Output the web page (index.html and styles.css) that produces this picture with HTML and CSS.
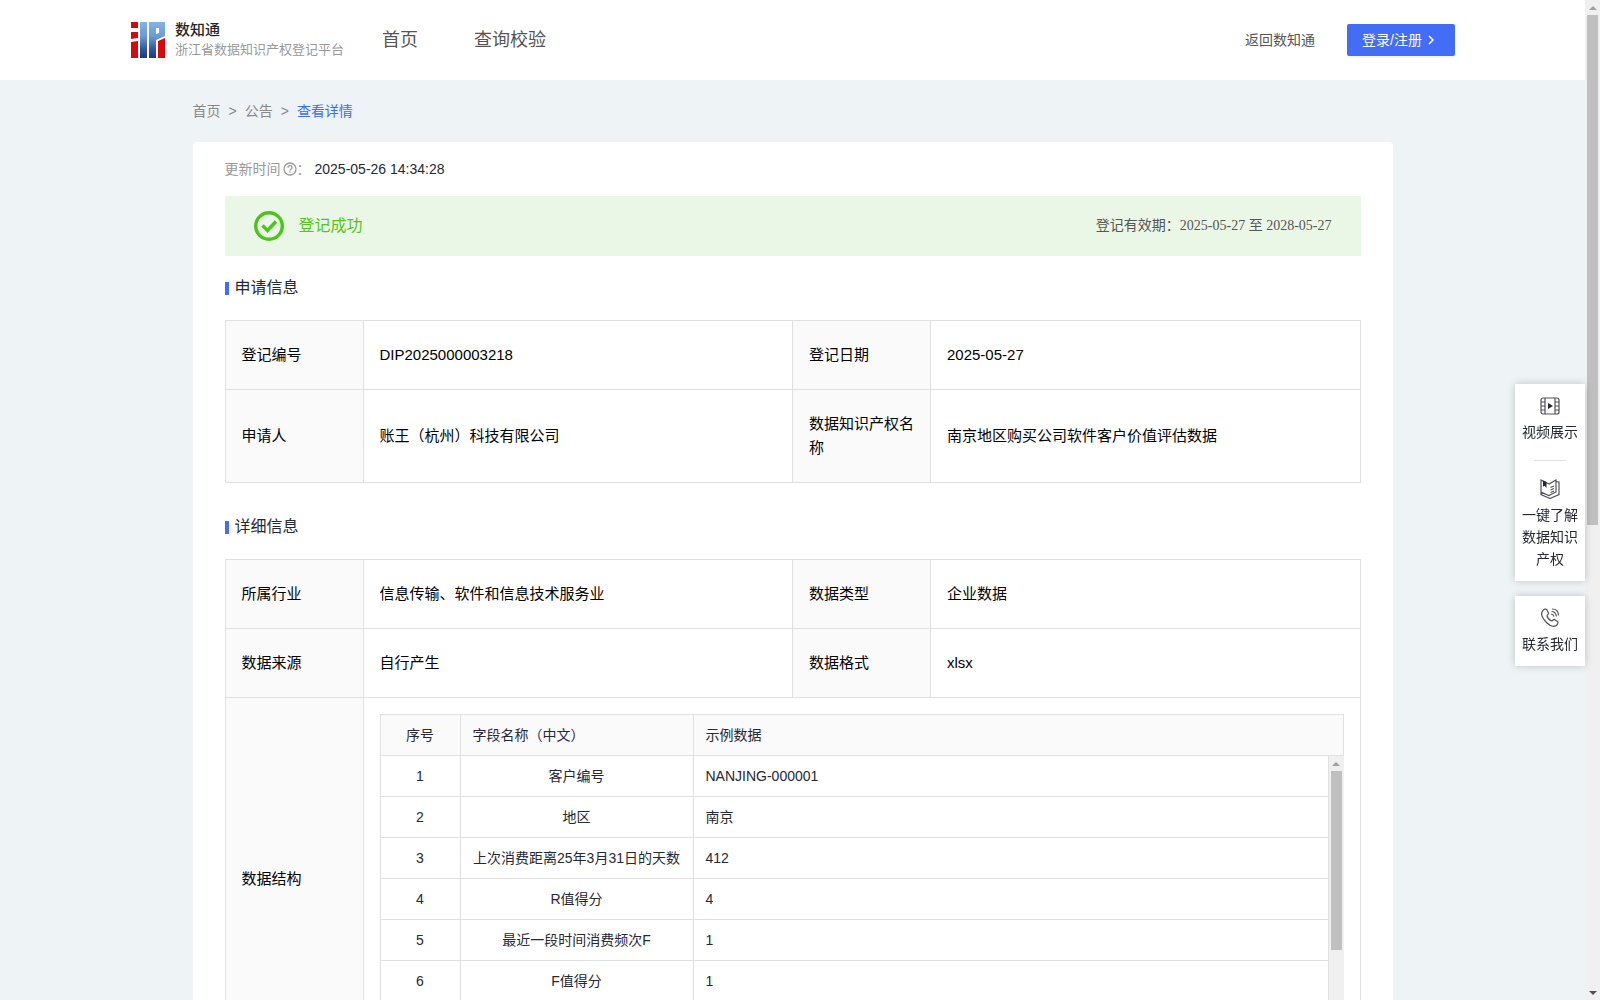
FILE: index.html
```html
<!DOCTYPE html>
<html lang="zh-CN">
<head>
<meta charset="utf-8">
<title>数知通 - 查看详情</title>
<link rel="stylesheet" href="styles.css">
</head>
<body>
<div class="app">
  <div class="page">
    <header class="header">
      <a class="brand" href="#">
        <svg class="brand-logo" viewBox="0 0 34 36" aria-hidden="true">
          <defs>
            <linearGradient id="blue" gradientUnits="userSpaceOnUse" x1="0" y1="0" x2="0" y2="36">
              <stop offset="0" stop-color="#82b4e8"/>
              <stop offset="0.4" stop-color="#6a9bd6"/>
              <stop offset="0.75" stop-color="#3457a0"/>
              <stop offset="1" stop-color="#22377f"/>
            </linearGradient>
          </defs>
          <path fill="#d40a0d" d="M0 0h7v6H0zM0 10h7v6l-7 1zM0 20l7-1v17H0zM27 19l7-3v20h-7z"/>
          <path fill="url(#blue)" d="M9 0h7v36H9z"/>
          <path fill="url(#blue)" fill-rule="evenodd" d="M18 0h16v14l-9 4v18h-7zM25 6v6l3-1V6z"/>
        </svg>
        <span class="brand-text">
          <strong class="brand-name">数知通</strong>
          <span class="brand-sub">浙江省数据知识产权登记平台</span>
        </span>
      </a>
      <nav class="nav">
        <a href="#">首页</a>
        <a href="#">查询校验</a>
      </nav>
      <a class="back-link" href="#">返回数知通</a>
      <button class="login" type="button">登录/注册
        <svg class="chevron" viewBox="0 0 10 10" aria-hidden="true"><path d="M3 1l4 4-4 4"/></svg>
      </button>
    </header>

    <main class="container">
      <nav class="breadcrumb" aria-label="面包屑">
        <a href="#">首页</a><span>&gt;</span><a href="#">公告</a><span>&gt;</span><a class="current" href="#">查看详情</a>
      </nav>

      <section class="card">
        <div class="updated">
          <span>更新时间</span>
          <svg class="help" viewBox="0 0 14 14" aria-hidden="true"><circle cx="7" cy="7" r="6"/><path d="M5 5.7a2 2 0 1 1 3 1.5c-.7.4-1 .7-1 1.4M7 9.6v1.1"/></svg>
          <span>：</span>
          <time class="updated-time">2025-05-26 14:34:28</time>
        </div>

        <div class="banner">
          <svg class="check" viewBox="0 0 30 30" aria-hidden="true"><circle cx="15" cy="15" r="13.3"/><path d="M8.500 14.500l5 5 8.500-9"/></svg>
          <span class="banner-title">登记成功</span>
          <span class="validity">登记有效期：2025-05-27 至 2028-05-27</span>
        </div>

        <h2 class="section-title">申请信息</h2>
        <table class="info">
          <colgroup><col class="label-col"><col><col class="label-col"><col></colgroup>
          <tbody>
            <tr><th scope="row">登记编号</th><td>DIP2025000003218</td><th scope="row">登记日期</th><td>2025-05-27</td></tr>
            <tr><th scope="row">申请人</th><td>账王（杭州）科技有限公司</td><th scope="row">数据知识产权名称</th><td>南京地区购买公司软件客户价值评估数据</td></tr>
          </tbody>
        </table>

        <h2 class="section-title">详细信息</h2>
        <table class="info">
          <colgroup><col class="label-col"><col><col class="label-col"><col></colgroup>
          <tbody>
            <tr><th scope="row">所属行业</th><td>信息传输、软件和信息技术服务业</td><th scope="row">数据类型</th><td>企业数据</td></tr>
            <tr><th scope="row">数据来源</th><td>自行产生</td><th scope="row">数据格式</th><td>xlsx</td></tr>
            <tr>
              <th scope="row">数据结构</th>
              <td class="nested" colspan="3">
                <table class="fields fields-head">
                  <colgroup><col class="no-col"><col class="name-col"><col></colgroup>
                  <thead><tr><th class="center" scope="col">序号</th><th scope="col">字段名称（中文）</th><th scope="col">示例数据</th></tr></thead>
                </table>
                <div class="fields-body">
                  <div class="fields-scroll">
                    <table class="fields">
                      <colgroup><col class="no-col"><col class="name-col"><col></colgroup>
                      <tbody>
                        <tr><td class="center">1</td><td class="center">客户编号</td><td>NANJING-000001</td></tr>
                        <tr><td class="center">2</td><td class="center">地区</td><td>南京</td></tr>
                        <tr><td class="center">3</td><td class="center">上次消费距离25年3月31日的天数</td><td>412</td></tr>
                        <tr><td class="center">4</td><td class="center">R值得分</td><td>4</td></tr>
                        <tr><td class="center">5</td><td class="center">最近一段时间消费频次F</td><td>1</td></tr>
                        <tr><td class="center">6</td><td class="center">F值得分</td><td>1</td></tr>
                        <tr><td class="center"></td><td class="center"></td><td></td></tr>
                      </tbody>
                    </table>
                  </div>
                  <div class="scrollbar" aria-hidden="true"><i class="arrow up"></i><i class="thumb thumb-fields"></i><i class="arrow down"></i></div>
                </div>
              </td>
            </tr>
          </tbody>
        </table>
      </section>
    </main>
  </div>

  <div class="scrollbar" aria-hidden="true"><i class="arrow up"></i><i class="thumb thumb-page"></i><i class="arrow down"></i></div>
</div>

<aside class="tools">
  <div class="tool-group">
    <a class="tool" href="#">
      <svg viewBox="0 0 20 20" aria-hidden="true"><rect x="1" y="2" width="18" height="16" rx="2"/><path d="M5 2v16M15 2v16M1 6h4M1 10h4M1 14h4M15 6h4M15 10h4M15 14h4"/><path class="solid" d="M8 7l5 3-5 3z"/></svg>
      <span>视频展示</span>
    </a>
    <a class="tool" href="#">
      <svg viewBox="0 0 20 20" aria-hidden="true"><path d="M1 1l8 4 7-4v12l-7 3.500-8-3.500zM1 13v2.500l9 4 9-4V3l-3-.5M10.500 8.500l3.500-1.500M10.500 11l3.500-1.500M10.500 13.500L14 12"/><path class="solid" d="M3 1.500l3.500 1.500v6L4.800 7 3 7.500z"/></svg>
      <span>一键了解数据知识产权</span>
    </a>
  </div>
  <div class="tool-group">
    <a class="tool" href="#">
      <svg viewBox="0 0 20 20" aria-hidden="true"><path d="M3 2.500C4 1 6 .5 7 2l1.500 3c.5 1-1.500 2-1.500 3 .5 2 2.500 4 4.500 5 1 0 2-2 3-1.500l3 2c1 1 .5 2-.5 3.500-2 2-6 2-10-2S-.5 6 3 2.500zM11 6c1.500 0 2.500 1 3 2.500M11.500 3.500c3 0 4.500 2 5 5M12 1c4 0 6.500 2.500 6.500 6.500"/></svg>
      <span>联系我们</span>
    </a>
  </div>
</aside>
</body>
</html>
```
FILE: styles.css
```css
* { box-sizing: border-box; }

body {
  margin: 0;
  background: #eef3f6;
  color: #262833;
  font: 14px/22px "Liberation Sans", "Noto Sans CJK SC", sans-serif;
}

a { color: inherit; text-decoration: none; }

.app {
  display: grid;
  grid-template-columns: minmax(0, 1fr) 15px;
  height: 100vh;
}

.page { overflow-y: auto; scrollbar-width: none; }

/* Header */
.header {
  display: flex;
  align-items: center;
  height: 80px;
  padding: 0 130px;
  background: #fff;
  color: #555;
}

.brand { display: flex; align-items: center; gap: 10px; margin-right: 38px; padding-left: 1px; }
.brand-logo { width: 34px; height: 36px; }
.brand-text { display: grid; }
.brand-name { color: #262626; font-size: 15px; line-height: 20px; font-weight: 500; }
.brand-sub { color: #999; font-size: 13px; line-height: 20px; }

.nav { display: flex; gap: 56px; margin-right: auto; font-size: 18px; }

.back-link { margin-right: 32px; }

.login {
  display: flex;
  align-items: center;
  gap: 4px;
  height: 32px;
  padding: 0 19px 0 15px;
  border: 0;
  border-radius: 2px;
  background: #446df6;
  box-shadow: 0 2px 0 rgba(0, 0, 0, 0.04);
  color: #fff;
  font: inherit;
}

.chevron { width: 10px; height: 10px; fill: none; stroke: currentColor; stroke-width: 1.500; }

/* Body */
.container { max-width: 1200px; margin: 0 auto; padding-bottom: 40px; }

.breadcrumb {
  display: flex;
  gap: 8px;
  padding: 20px 0;
  color: #888;
}

.breadcrumb .current { color: #3f6bf5; }

.card { padding: 16px 32px 32px; border-radius: 4px; background: #fff; }

.updated { display: flex; align-items: center; color: #999; }
.updated-time { margin-left: 4px; color: #262833; }
.help { width: 14px; height: 14px; margin-left: 2px; fill: none; stroke: currentColor; stroke-width: 1.300; }

.banner {
  display: flex;
  align-items: center;
  height: 60px;
  margin: 16px 0 21px;
  padding: 0 29px;
  background: #ebf7e6;
}

.check { width: 30px; height: 30px; margin-right: 15px; fill: none; stroke: #4bc41c; stroke-width: 3.400; }
.banner-title { color: #52c41a; font-size: 16px; }
.validity { margin-left: auto; color: #555; font-family: "Liberation Serif", "Noto Sans CJK SC", serif; }

.section-title {
  display: flex;
  align-items: center;
  gap: 6px;
  margin: 0 0 21px;
  font-size: 16px;
  line-height: 22px;
  font-weight: 400;
}

.section-title::before { content: ""; width: 4px; height: 13px; background: #446df6; }

/* Tables */
table { width: 100%; border-collapse: separate; border-spacing: 0; table-layout: fixed; }
th, td { text-align: left; font-weight: 400; border: 0 solid #e0e0e0; }
th { background: #fafafa; }

.info { margin-bottom: 33px; border: 0 solid #e0e0e0; border-width: 1px 0 0 1px; color: #000; font-size: 15px; line-height: 24px; }
.info .label-col { width: 138px; }
.info th, .info td { padding: 22px 16px; border-width: 0 1px 1px 0; }
.info td.nested { padding: 16px; }

.fields { color: #262833; font-size: 14px; line-height: 22px; }
.fields .no-col { width: 81px; }
.fields .name-col { width: 233px; }
.info .fields th, .info .fields td { height: 41px; padding: 9px 12px; border-width: 0 1px 1px 0; }
.info .fields th:first-child, .info .fields td:first-child { border-left-width: 1px; }
.info .fields-head th { border-top-width: 1px; height: 42px; }
.info .fields .center { text-align: center; }

.fields-body { display: grid; grid-template-columns: minmax(0, 1fr) 15px; }

/* Scroll bars */
.scrollbar {
  display: flex;
  flex-direction: column;
  align-items: center;
  background: #f0f0f0;
}

.arrow { display: grid; place-items: center; width: 15px; height: 15px; }
.arrow::before { content: ""; border: 0 solid transparent; border-width: 4px; }
.arrow.up::before { border-top: 0; border-bottom-color: #a0a0a0; }
.arrow.down::before { border-bottom: 0; border-top-color: #505050; }
.arrow.down { margin-top: auto; }
.thumb { width: 11px; background: #c0c0c0; }
.thumb-page { height: 51%; }
.thumb-fields { height: 179px; }

/* Floating tools */
.tools { position: fixed; top: 384px; right: 15px; display: grid; gap: 15px; width: 70px; }
.tool-group { padding: 0 7px; background: #fff; box-shadow: 0 0 8px rgba(0, 0, 0, 0.2); }
.tool { display: grid; justify-items: center; gap: 5px; padding: 12px 0 11px; text-align: center; }
.tool + .tool::before { content: ""; width: 32px; height: 1px; margin-bottom: 13px; background: #e0e0e0; }
.tool + .tool { padding-top: 6px; }
.tool svg { width: 20px; height: 20px; fill: none; stroke: #50505a; stroke-width: 1.200; }
.tool .solid { fill: #262833; stroke: none; }
```
